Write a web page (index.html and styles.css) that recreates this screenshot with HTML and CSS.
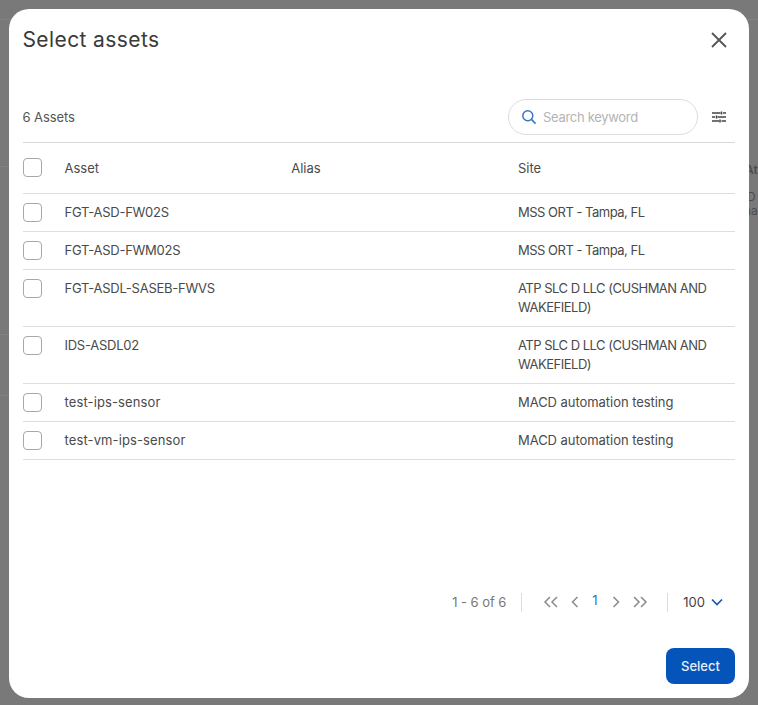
FILE: index.html
```html
<!DOCTYPE html>
<html lang="en">
<head>
<meta charset="utf-8">
<title>Select assets</title>
<link rel="stylesheet" href="styles.css">
</head>
<body>
<div class="backdrop" aria-hidden="true">
  <span class="bg-line bg-line-a"></span>
  <span class="bg-line bg-line-b"></span>
  <span class="bg-line bg-line-c"></span>
  <span class="bg-line bg-line-d"></span>
  <span class="bg-text bg-text-a">At</span>
  <span class="bg-text bg-text-b">D</span>
  <span class="bg-text bg-text-c">na</span>
</div>
<main class="modal">
  <header class="modal-head">
    <h1 class="modal-title">Select assets</h1>
    <svg class="close-icon" viewBox="0 0 16 16" aria-label="Close"><path d="M1 1 15 15M15 1 1 15"/></svg>
  </header>
  <div class="toolbar">
    <span class="count">6 Assets</span>
    <div class="search">
      <svg class="search-icon" viewBox="0 0 16 16"><circle cx="6.800" cy="6.800" r="5"/><path d="M10.400 10.400 14.600 14.600"/></svg>
      <span class="search-placeholder">Search keyword</span>
    </div>
    <svg class="tune-icon" viewBox="0 0 14 12"><path d="M0 2H8.500M11 2H14M0 6H3M5.500 6H14M0 10H7M9.500 10H14"/><path class="tune-knob" d="M9.500 .4V3.600M4.500 4.400V7.600M8 8.400V11.600"/></svg>
  </div>
  <div class="table">
    <div class="row row-head">
      <span class="checkbox"></span><span>Asset</span><span>Alias</span><span>Site</span>
    </div>
    <div class="row">
      <span class="checkbox"></span><span class="t-caps">FGT-ASD-FW02S</span><span></span><span class="t-site">MSS ORT - Tampa, FL</span>
    </div>
    <div class="row">
      <span class="checkbox"></span><span class="t-caps">FGT-ASD-FWM02S</span><span></span><span class="t-site">MSS ORT - Tampa, FL</span>
    </div>
    <div class="row">
      <span class="checkbox"></span><span class="t-caps">FGT-ASDL-SASEB-FWVS</span><span></span><span class="t-site">ATP SLC D LLC (CUSHMAN AND WAKEFIELD)</span>
    </div>
    <div class="row">
      <span class="checkbox"></span><span class="t-caps">IDS-ASDL02</span><span></span><span class="t-site">ATP SLC D LLC (CUSHMAN AND WAKEFIELD)</span>
    </div>
    <div class="row">
      <span class="checkbox"></span><span class="t-lower">test-ips-sensor</span><span></span><span class="t-mixed">MACD automation testing</span>
    </div>
    <div class="row">
      <span class="checkbox"></span><span class="t-lower">test-vm-ips-sensor</span><span></span><span class="t-mixed">MACD automation testing</span>
    </div>
  </div>
  <div class="pager">
    <span class="range">1 - 6 of 6</span>
    <span class="pager-sep pager-sep-first"></span>
    <div class="pager-nav">
      <svg class="pg-icon pg-double" viewBox="0 0 16 12"><path d="M7 1 2 6 7 11M14 1 9 6 14 11"/></svg>
      <svg class="pg-icon pg-single" viewBox="0 0 9 12"><path d="M7.500 1 2.500 6 7.500 11"/></svg>
      <span class="page-num">1</span>
      <svg class="pg-icon pg-single" viewBox="0 0 9 12"><path d="M1.500 1 6.500 6 1.500 11"/></svg>
      <svg class="pg-icon pg-double" viewBox="0 0 16 12"><path d="M2 1 7 6 2 11M9 1 14 6 9 11"/></svg>
    </div>
    <span class="pager-sep"></span>
    <div class="page-size">
      <span>100</span>
      <svg class="chevron" viewBox="0 0 12 8"><path d="M1 1.500 6 6.500 11 1.500"/></svg>
    </div>
  </div>
  <footer class="modal-foot">
    <button class="select-btn" type="button">Select</button>
  </footer>
</main>
</body>
</html>
```
FILE: styles.css
```css
* { box-sizing: border-box; }

html, body {
  margin: 0;
  height: 705px;
  overflow: hidden;
}

body {
  position: relative;
  background: #797979;
  font-family: Inter, "Liberation Sans", sans-serif;
  color: #444;
  padding: 9px 9px 7px;
}

.backdrop { position: absolute; inset: 0; overflow: hidden; }
.bg-line { position: absolute; height: 1px; background: #828282; }
.bg-line-a { left: 0; right: 0; top: 19px; }
.bg-line-b { left: 0; width: 9px; top: 166px; }
.bg-line-c { left: 0; width: 9px; top: 334px; }
.bg-line-d { left: 0; width: 9px; top: 395px; }
.bg-text { position: absolute; font-size: 12px; line-height: 14px; color: #4d4d4d; }
.bg-text-a { left: 745px; top: 163px; font-weight: 600; }
.bg-text-b { left: 747px; top: 190px; }
.bg-text-c { left: 744px; top: 204px; }

.modal {
  position: relative;
  width: 740px;
  height: 689px;
  background: #fff;
  border-radius: 20px;
  padding: 0 14px 0 13.500px;
  display: flex;
  flex-direction: column;
}

.modal-head {
  display: flex;
  justify-content: space-between;
  align-items: center;
  height: 61px;
  padding-right: 8px;
}

.modal-title {
  margin: 0;
  font-size: 21px;
  font-weight: 400;
  letter-spacing: 0.4px;
  line-height: 60px;
  color: #3a3a3a;
}

.close-icon { width: 16px; height: 16px; fill: none; stroke: #555; stroke-width: 1.800; }

.toolbar {
  margin-top: 29px;
  height: 44px;
  display: flex;
  align-items: center;
  border-bottom: 1px solid #d8d8d8;
  padding-bottom: 7px;
}

.count { font-size: 13px; color: #555; margin-right: auto; letter-spacing: -0.1px; }

.search {
  width: 190px;
  height: 36px;
  border: 1px solid #dcdcdc;
  border-radius: 18px;
  display: flex;
  align-items: center;
  gap: 6px;
  padding-left: 12px;
}

.search-icon { width: 16px; height: 16px; fill: none; stroke: #3a74c4; stroke-width: 1.500; }
.search-placeholder { font-size: 13px; color: #b4b4b4; letter-spacing: -0.3px; }

.tune-icon { width: 14px; height: 12px; margin: 0 9px 0 14px; fill: none; stroke: #444; stroke-width: 1.300; }
.tune-knob { stroke-width: 1.500; }

.row {
  display: grid;
  grid-template-columns: 42px 226.750px 226.750px 1fr;
  align-items: start;
  border-bottom: 1px solid #dedede;
  font-size: 13px;
  line-height: 19px;
  padding: 9px 0;
  color: #4a4a4a;
}

.row-head { padding: 15px 0; height: 51px; line-height: 21px; }

.t-caps { letter-spacing: -0.25px; }
.t-site { letter-spacing: -0.5px; }
.t-lower { letter-spacing: 0.12px; }
.t-mixed { letter-spacing: -0.05px; }

.checkbox {
  display: block;
  width: 19px;
  height: 19px;
  border: 1px solid #a8a8a8;
  border-radius: 4px;
  background: #fff;
}

.pager {
  margin-top: 132px;
  height: 20px;
  display: flex;
  align-items: center;
  justify-content: flex-end;
  padding-right: 12px;
  font-size: 13px;
}

.range { color: #777; letter-spacing: -0.05px; }
.pager-sep { width: 1px; height: 19px; background: #dcdcdc; margin: 0 15px 0 19px; }
.pager-sep-first { margin: 0 21px 0 15px; }

.pager-nav { display: flex; align-items: center; gap: 11px; }
.pg-icon { height: 12px; fill: none; stroke: #8a8a8a; stroke-width: 1.500; }
.pg-double { width: 16px; }
.pg-single { width: 9px; }
.page-num { color: #2f6fc6; font-size: 13px; width: 7px; margin: 0 2px; position: relative; bottom: 2px; }

.page-size { display: flex; align-items: center; gap: 6px; color: #444; }
.chevron { width: 12px; height: 8px; fill: none; stroke: #1558b0; stroke-width: 1.700; }

.modal-foot {
  margin-top: 36px;
  display: flex;
  justify-content: flex-end;
}

.select-btn {
  width: 69px;
  height: 36px;
  border: 0;
  border-radius: 8px;
  background: #0554ba;
  color: #e8eef8;
  font: 500 13px Inter, "Liberation Sans", sans-serif;
}
```
